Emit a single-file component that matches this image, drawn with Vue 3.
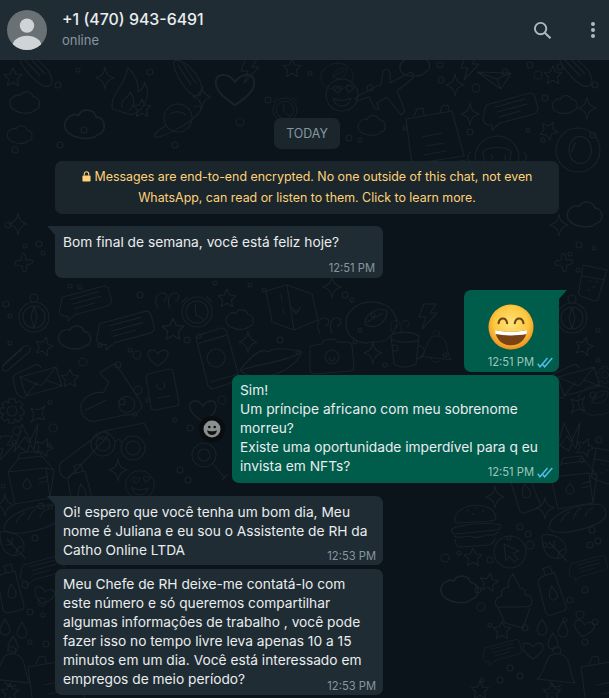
<template>
  <div class="chat">
    <header class="topbar">
      <svg class="avatar" viewBox="0 0 40 40">
        <circle cx="20" cy="20" r="20" fill="#6a7175" />
        <clipPath id="avatarClip"><circle cx="20" cy="20" r="20" /></clipPath>
        <g clip-path="url(#avatarClip)" fill="#cfd4d6">
          <circle cx="20" cy="15.6" r="7.2" />
          <ellipse cx="20" cy="36" rx="14.5" ry="10.2" />
        </g>
      </svg>
      <div class="contact">
        <div class="contact-name">+1 (470) 943-6491</div>
        <div class="contact-status">online</div>
      </div>
      <svg class="search" viewBox="0 0 20 20" fill="none" stroke="#aebac1">
        <circle cx="8" cy="8" r="6" stroke-width="2" />
        <path d="M12.4 12.4 L18.4 18.2" stroke-width="2.2" />
      </svg>
      <div class="menu"><i></i><i></i><i></i></div>
    </header>

    <main class="thread">
      <!-- wallpaper, coordinates are page pixels so shift up by the header -->
      <svg class="doodles" viewBox="0 60 609 638" fill="none" stroke="#182229" stroke-width="1.1" stroke-linejoin="round" stroke-linecap="round">
        <circle v-for="d in dots" :key="d.join()" :cx="d[0]" :cy="d[1]" :r="d[2]" />
        <path
          v-for="p in placed"
          :key="p.join()"
          :d="shapes[p[0]]"
          :transform="`translate(${p[1]} ${p[2]}) rotate(${p[3] || 0}) scale(${p[4] || 1})`"
        />
      </svg>

      <div class="pill">TODAY</div>
      <div class="notice">
        <svg class="lock" viewBox="0 0 10 12" fill="#ffd279">
          <path d="M1.4 5h7.2c.5 0 .9.4.9.9v4.700c0 .5-.4.9-.9.9H1.400c-.5 0-.9-.4-.9-.9V5.900c0-.5.4-.9.9-.9z" />
          <path d="M2.500 5V3.300a2.500 2.500 0 0 1 5 0V5" fill="none" stroke="#ffd279" stroke-width="1.200" />
        </svg>Messages are end-to-end encrypted. No one outside of this chat, not even WhatsApp, can read or listen to them. Click to learn more.
      </div>

      <div class="row">
        <div class="bubble in first short">
          <span>Bom final de semana, você está feliz hoje?</span>
          <span class="meta meta-in">12:51 PM</span>
        </div>
      </div>

      <div class="row out-row">
        <div class="bubble out emoji-bubble">
          <svg class="emoji" viewBox="0 0 48 48">
            <defs>
              <radialGradient id="faceFill" cx="50%" cy="42%" r="58%">
                <stop offset="0%" stop-color="#ffe27a" />
                <stop offset="65%" stop-color="#fcc83f" />
                <stop offset="100%" stop-color="#ee8f1c" />
              </radialGradient>
            </defs>
            <circle cx="24" cy="24" r="23.500" fill="url(#faceFill)" />
            <path d="M11 20c1-6.500 8-6.500 9 0M28 20c1-6.500 8-6.500 9 0" fill="none" stroke="#6a4213" stroke-width="2.200" stroke-linecap="round" />
            <path d="M7.500 27c10 2.500 23 2.500 33 0C40 37 33 43 24 43S8 37 7.500 27z" fill="#7a4315" />
            <path d="M7.500 27c10 2.500 23 2.500 33 0 .2 1.800-.1 3.500-.4 4.300-10 2-22.200 2-32.200 0-.3-.8-.6-2.500-.4-4.300z" fill="#fff" />
          </svg>
          <div class="meta meta-out">12:51 PM <svg class="ticks" viewBox="0 0 16 11" fill="none" stroke="#53bdeb" stroke-width="1.4"><path d="M.7 6.800 3 9.800 10.500 1M5.600 7.300 7.600 9.800 15.300 1" /></svg></div>
        </div>
      </div>

      <div class="row out-row long-row">
        <button class="react"><svg viewBox="0 0 20 20"><circle cx="10" cy="10" r="8.500" fill="#8a8f91" /><circle cx="7.300" cy="8" r="1.300" fill="#111" /><circle cx="12.700" cy="8" r="1.300" fill="#111" /><path d="M5 11.500c2.500 1 7.500 1 10 0-.6 3-2.600 4.500-5 4.500s-4.400-1.500-5-4.500z" fill="#111" /></svg></button>
        <div class="bubble out long">
          <span>Sim!<br />Um príncipe africano com meu sobrenome morreu?<br />Existe uma oportunidade imperdível para q eu invista em NFTs?</span>
          <div class="meta meta-out">12:51 PM <svg class="ticks" viewBox="0 0 16 11" fill="none" stroke="#53bdeb" stroke-width="1.4"><path d="M.7 6.800 3 9.800 10.500 1M5.600 7.300 7.600 9.800 15.300 1" /></svg></div>
        </div>
      </div>

      <div class="row group-start">
        <div class="bubble in first three">
          <span>Oi! espero que você tenha um bom dia, Meu nome é Juliana e eu sou o Assistente de RH da Catho Online LTDA</span>
          <span class="meta meta-in">12:53 PM</span>
        </div>
      </div>
      <div class="row tight">
        <div class="bubble in six">
          <span>Meu Chefe de RH deixe-me contatá-lo com este número e só queremos compartilhar algumas informações de trabalho , você pode fazer isso no tempo livre leva apenas 10 a 15 minutos em um dia. Você está interessado em empregos de meio período?</span>
          <span class="meta meta-in">12:53 PM</span>
        </div>
      </div>
    </main>
  </div>
</template>

<script setup>
const shapes = {
  sparkle: "M0-11C1-4 3-2 9 0C3 2 1 4 0 11C-1 4-3 2-9 0C-3-2-1-4 0-11Z",
  star: "M0-9L2.700-3 9-2.300 4.400 2 5.600 8.500 0 5.300-5.600 8.500-4.400 2-9-2.300-2.700-3Z",
  plus: "M-2-9C0-10 2-9 2-3L8-3C10-1 9 1 3 2L2 8C0 10-2 8-2 3L-8 2C-10 0-9-3-3-3Z",
  cloud: "M-12 3C-15-4-7-8-4-6C-2-11 6-10 7-5C13-5 14 5 8 6C4 10-8 9-12 3Z",
  heart: "M0 9C-6 5-11 1-10-4C-9-8-3-8 0-3C3-8 9-8 10-4C11 1 6 5 0 9Z",
  drop: "M0-8C3-3 5 0 5 3A5 5 0 0 1-5 3C-5 0-3-3 0-8Z",
  leaf: "M-13-13C0-15 12-8 11 3C10 10 2 12-4 9C-11 6-13-3-13-13ZM-6-6L12 13M-1-1L-1-7M4 4L9 1M-1-1L-7 0M4 4L3 9",
  message: "M-24-6L20-18C23-18 24-17 25-14L28-2C28 1 26 2 24 3L-10 12L-18 19L-18 14L-22 14C-25 13-27 12-27 8ZM-15-4L15-12M-13 1L17-7M-11 6L10 0",
  envelope: "M-20-3L16-13L22 6L-14 16ZM-20-3L1 6L16-13M-14 16L-3 2M22 6L6 0M-22-7L-5-15C-2-16 0-15 1-12M-14 18C-19 18-23 15-24 11L-27-1C-27-4-25-6-22-7",
  compass: "M0-11L3 0L0 11L-3 0ZM15 0A15 15 0 1 1-15 0A15 15 0 1 1 15 0ZM11 0A11 11 0 1 1-11 0A11 11 0 1 1 11 0ZM4-19A4 4 0 1 1-4-19A4 4 0 1 1 4-19Z",
  clock: "M15 0A15 15 0 1 1-15 0A15 15 0 1 1 15 0ZM11 0A11 11 0 1 1-11 0A11 11 0 1 1 11 0ZM-2-8L-1 3L6 7M10-15L15-10M-10-15L-15-10",
  milk: "M-22-8L-12-21L12-24L24-10L20 18L-15 24ZM-22-8L16-12L24-10M16-12L20 18M-12-21L-10-27L9-29L12-24M-3-2C-1 1 1 3 1 5A4 4 0 0 1-7 5C-7 3-5 1-3-2ZM9-1L18-4M9 3L17 1",
  bread: "M-26 8C-25-3-5-14 20-15C32-15 33-3 28 1C15 11-25 19-26 8ZM-14 3C-12-3-8-6-5-7M-2 0C0-6 2-9 6-11M10-3C12-8 14-10 18-11",
  bottle: "M-8-16L5-19L14 16C14 19 12 20 10 20L-3 23C-5 23-6 22-7 20L-12-10C-12-12-11-14-8-16ZM-4-17L-6-24L1-26L3-19M1-6C4-2 6 1 6 3A4 4 0 0 1-2 5C-2 2-1-2 1-6Z",
  bell: "M-18 14C-10 8-10-4-5-9C0-13 8-12 12-6C16-1 14 8 20 18ZM-2-13A4 4 0 1 1 4-11M-5 17C-3 22 3 23 6 20",
  burger: "M-20-3C-19-20 18-22 21-5C21-2 19-1 16-1L-17 1C-19 1-20-1-20-3ZM-8-11L-6-12M0-14L2-14M7-11L9-11M-3-8L-1-8M-23 7C-15 2 15 0 25 3C27 5 25 8 22 8L-20 12C-23 12-24 9-23 7ZM-21 14C-14 18-8 12-2 15C4 18 10 11 16 13C19 14 21 12 23 10M-20 17L-19 22C-18 24-16 25-14 25L14 23C17 22 19 20 20 16",
  cupcake: "M-16 9C-20 2-15-2-11-2C-14-8-7-11-4-11C-6-16-4-20 0-24C2-18 6-16 7-10C12-10 13-6 12-3C18-3 21 2 18 7C17 9 15 9-16 9ZM-15 9L-8 25L10 30L17 10",
  cursor: "M16 0A16 16 0 1 1-16 0A16 16 0 1 1 16 0ZM-6-8L9-1L3 1L8 7L4 10L-1 4L-4 9Z",
  clip: "M-14 10L6-8C12-12 16-6 11-2L-9 15C-13 18-17 13-13 10L5-6",
  gear: "M-3-12L3-12L4-8L8-10L11-6L8-3L12-1L12 4L8 4L10 8L6 11L3 8L2 12L-3 12L-4 8L-8 10L-11 6L-8 3L-12 2L-12-3L-8-3L-10-7L-6-10L-3-8ZM5 0A5 5 0 1 1-5 0A5 5 0 1 1 5 0Z",
  bow: "M-14 14L-6-14L2 3L10-14L6 12L-3-1ZM-10 8L-1 14L3 3",
  glass: "M-9-17L15-12L6 17C5 19 4 19 2 19L-11 14C-13 13-14 11-13 9ZM-10-6L13-2M-3-1L-1-1M4 0L6 0M1 5L3 5M-4 8L-2 8",
  face: "M16 0A16 16 0 1 1-16 0A16 16 0 1 1 16 0ZM-8-5C-11-9-5-10-4-7C-3-10 1-8-1-5L-4-2ZM4-7C3-10 8-11 9-8C10-11 13-7 10-5L6-3ZM-9 3C-4 6 3 6 9 3C8 9 3 11 0 11C-5 11-8 8-9 3Z",
  plane: "M2-26C4-26 6-22 5-12L24-22C28-24 30-20 27-16L12-4L20 16L16 20L2 2L-8 8L-6 14L-10 14L-16 2L-28 6L-30 3L-10-8L-4-10L-2-24Z",
  calendar: "M-24-13L22-21L34 24L-18 32ZM-16-16L-13-23L-7-24L-6-17M10-19L12-26L18-27L19-21M-19 36L36 28M-8 5L12 1M-4 14L14 11M-6 23L16 19",
  phone: "M-14-24L8-28C11-28 13-27 14-24L20 22C20 25 18 27 16 27L-7 31C-10 31-11 29-12 27L-17-20C-18-22-16-24-14-24ZM-15-16L13-20M-9 24L19 20M9 1A9 9 0 1 1-9 1A9 9 0 1 1 9 1Z",
  camera: "M-20-9L-8-11L-6-15L5-16L7-13L18-13C20-13 22-11 22-9L24 12C24 14 22 16 20 16L-16 19C-18 19-20 17-20 15ZM9 2A7 7 0 1 1-5 2A7 7 0 1 1 9 2ZM4 2A2.500 2.500 0 1 1 0 2",
  mug: "M-14-15C-6-19 6-19 14-14L11 14C4 18-6 18-11 14ZM-14-11C-6-7 6-7 14-10M14-4C21-5 22 7 12 9",
  map: "M-24-15L-3-21L22-12L28 14L4 24L-18 16ZM-3-21L4 24M-9-12L-8-5M-7 2L-6 8M10 1A4 4 0 1 1 2 1C2 5 6 7 6 8C6 7 10 5 10 1Z",
  monkey: "M22 0A22 22 0 1 1-22 0A22 22 0 1 1 22 0ZM-14-6C-10-12 10-12 14-6C14 4 8 12 0 12C-8 12-14 4-14-6ZM-6-3A2 2 0 1 1-6 1M7-3A2 2 0 1 1 7 1M-26-6A5 5 0 1 0-22 4M26-6A5 5 0 1 1 22 4",
  helmet: "M20 0A20 20 0 1 1-20 0A20 20 0 1 1 20 0ZM12-2A9 11 0 1 1-8 2A9 11 0 1 1 12-2ZM-2-7L-6 2",
  glasses: "M-3 4A12 12 0 1 1-27 4A12 12 0 1 1-3 4ZM-8 4A7 7 0 1 1-22 4A7 7 0 1 1-8 4ZM27 8A12 12 0 1 1 3 8A12 12 0 1 1 27 8ZM22 8A7 7 0 1 1 8 8A7 7 0 1 1 22 8ZM-3 2C-1-2 2-1 4 3M-14-9L26-17M26-17L32-6",
  lens: "M12 0A12 12 0 1 1-12 0A12 12 0 1 1 12 0ZM6 0A6 6 0 1 1-6 0A6 6 0 1 1 6 0ZM9 9L20 22M18 25L23 20",
  scooter: "M-30 8C-30-3-16-8-6-6L0-16L-8-26L8-34L14-24L30 6C34 14 24 20 14 18L-18 22C-24 22-30 16-30 8ZM24 8A8 8 0 1 1 8 8A8 8 0 1 1 24 8ZM-26 10L-4 2",
  card: "M-13-15L8-20C10-20 12-19 12-17L18 13C18 15 17 17 15 17L-6 21C-8 21-10 20-10 18L-15-12C-15-13-14-15-13-15ZM3-6A4 4 0 1 1-4-5M-3 9L9 7",
  roll: "M-30 8L14-16C18-18 22-14 18-10L-24 24C-32 28-36 14-30 8ZM8-14C10-10 12-8 16-8",
  bolt: "M-4-12L8-12L2-3L9-3L-6 13L-2 1L-9 1Z",
  paper: "M-16-7L18-6L8 10ZM-16-7L4 0L18-6M4 0L8 10",
  comet: "M-16-15C-4-18 14-2 16 10C17 17 9 18 4 14C-5 8-20-10-16-15ZM-12-11L4 6M-7-13L9 4",
  flame: "M-14 22C-20 8-6 0-6-22C2-16 8-8 8 0C12-2 13-6 13-10C22 0 18 18 6 24ZM-5 18C-8 10 0 8 1 2C6 8 8 14 3 20",
  planet: "M14 0A14 14 0 1 1-14 0A14 14 0 1 1 14 0ZM-12 8C-24 14-26 20-20 19C-14 18 8 8 18-2C26-10 24-14 16-11M-8-4C-3-7 3-7 8-3",
  quote: "M-8 8C-12 2-11-7-3-7C2-7 2 0-3 1M4 8C1 2 2-7 9-7C14-7 14 0 9 1",
  lips: "M-30 12C-22 2-10-12-2-6C6-12 26-8 32-6C26 8 8 18-6 18C-16 20-24 18-30 12ZM-28 12C-14 6 14 4 28-4",
  cup: "M-26-6C-16-22 8-22 16-8C24 2 14 20-2 18C-14 22-32 14-26-6ZM-10 2C-10-8 2-14 10-10C10 0 0 8-10 2ZM-8 0L6-8"
}

// [shape, x, y, rotate, scale]
const placed = [
  ["star", 13, 77], ["cloud", 25, 103, 0, 1.2], ["sparkle", 105, 78], ["flame", 130, 90, 10], ["comet", 36, 70],
  ["comet", 188, 78, 10], ["heart", 235, 88, 0, 1.9], ["sparkle", 202, 97], ["planet", 178, 118], ["cloud", 85, 125, 0, 1.6],
  ["star", 142, 108], ["clock", 285, 110, 0, 0.8], ["star", 292, 68], ["bolt", 250, 70], ["cloud", 20, 135],
  ["face", 342, 95], ["plane", 385, 95], ["cloud", 415, 66, -8, 1.2], ["calendar", 430, 132], ["cloud", 372, 126, -5, 1.1],
  ["sparkle", 455, 85], ["bolt", 470, 67], ["paper", 493, 79], ["star", 553, 75], ["comet", 576, 70],
  ["message", 510, 111, 0, 1], ["sparkle", 470, 114], ["sparkle", 587, 108], ["cloud", 565, 105, -5, 1], ["star", 549, 130, 30],
  ["monkey", 497, 158], ["helmet", 578, 150, 0, 1.1], ["cup", 340, 76, 0, 0.7],

  ["sparkle", 18, 224], ["plus", 24, 263], ["compass", 34, 317], ["clip", 17, 355], ["star", 44, 346, 15],
  ["envelope", 40, 380], ["gear", 12, 411], ["sparkle", 38, 414, 40], ["bow", 28, 438], ["star", 44, 447, 20],
  ["milk", 30, 480], ["bolt", 5, 448], ["sparkle", 5, 505], ["bread", 30, 520], ["leaf", 13, 545],
  ["message", 42, 570, 0, 0.8], ["bottle", 10, 590], ["drop", 5, 627], ["drop", 22, 630], ["drop", 13, 644],
  ["heart", 44, 595, 15], ["bell", 10, 665], ["star", 10, 692], ["calendar", 52, 680],

  ["sparkle", 559, 225], ["plus", 564, 263], ["glass", 592, 282], ["cloud", 585, 215, 0, 1.4], ["compass", 572, 318],
  ["star", 584, 346, 15], ["envelope", 578, 380], ["sparkle", 578, 405, 40], ["bow", 570, 437], ["star", 585, 447, 20],
  ["cup", 600, 400, 0, 0.8], ["gear", 605, 375, 0, 0.7], ["milk", 573, 485], ["glass", 605, 465],

  ["burger", 475, 522], ["bread", 575, 519], ["sparkle", 545, 508], ["sparkle", 495, 497], ["bottle", 524, 490, -8],
  ["cursor", 510, 552], ["leaf", 555, 548], ["message", 588, 568, 0, 0.7], ["star", 473, 557], ["bottle", 551, 592, -5],
  ["cupcake", 513, 598], ["star", 489, 582, 10], ["star", 502, 630], ["heart", 584, 628, 10], ["drop", 542, 627],
  ["drop", 563, 629], ["drop", 553, 641], ["message", 502, 652, 0, 0.7], ["heart", 533, 650], ["bell", 555, 665],
  ["calendar", 605, 680], ["star", 552, 692], ["cloud", 460, 590, 0, 1.5], ["star", 480, 690],

  ["message", 85, 303, 0, 0.95], ["message", 125, 330, 0, 1.05], ["quote", 166, 300], ["clock", 197, 312], ["star", 173, 329, 0, 1.2],
  ["star", 227, 298], ["cloud", 240, 320, 0, 1.1], ["map", 290, 306], ["quote", 328, 325], ["sparkle", 332, 287],
  ["phone", 216, 357, -8], ["sparkle", 248, 342], ["lips", 270, 358], ["camera", 330, 355], ["mug", 405, 350],
  ["bell", 435, 345, 0, 0.8], ["bolt", 428, 316], ["sparkle", 373, 353], ["cup", 376, 322, 0, 1.1], ["quote", 399, 326, 0, 0.8],
  ["scooter", 110, 398, -5], ["heart", 158, 357], ["card", 161, 389], ["glasses", 118, 440], ["lens", 204, 455],
  ["roll", 90, 450, -8], ["sparkle", 118, 470], ["cloud", 75, 338, 0, 1.3], ["star", 70, 378], ["heart", 203, 410, 0, 1.3],
  ["face", 140, 485, 0, 0.9], ["bottle", 80, 490]
]

const dots = [
  [58, 85, 3], [78, 70, 2], [84, 130, 3], [150, 72, 3], [268, 100, 3], [240, 122, 4], [15, 150, 3], [60, 145, 3], [175, 145, 3],
  [310, 73, 2], [370, 88, 3], [440, 65, 3], [441, 80, 3], [476, 88, 4], [505, 72, 3], [530, 65, 3], [538, 75, 4], [560, 67, 3],
  [595, 85, 3], [545, 98, 3], [593, 135, 3], [528, 130, 2], [349, 138, 3], [360, 140, 2], [405, 128, 2], [470, 132, 3], [543, 140, 2],
  [8, 225, 3], [25, 246, 2], [39, 244, 3], [43, 253, 2], [6, 304, 3], [10, 316, 2], [10, 343, 2], [49, 445, 2], [17, 431, 4], [53, 428, 4],
  [50, 402, 2], [14, 442, 2], [3, 486, 2], [35, 538, 3], [41, 506, 3], [50, 507, 2], [25, 585, 3], [43, 615, 2], [30, 612, 3],
  [42, 602, 4], [30, 642, 2], [46, 644, 3], [579, 245, 3], [570, 254, 2], [594, 248, 2], [578, 270, 2], [598, 330, 2], [598, 360, 2], [593, 395, 3],
  [599, 440, 3], [582, 460, 2], [509, 538, 2], [520, 527, 3], [528, 534, 3], [530, 545, 4], [545, 545, 2], [592, 530, 3], [590, 545, 3], [598, 541, 3],
  [445, 558, 4], [459, 553, 2], [490, 560, 3], [481, 607, 4], [490, 625, 2], [478, 590, 3], [570, 600, 3], [580, 615, 4], [585, 590, 3], [565, 620, 2],
  [525, 628, 3], [510, 668, 3], [482, 680, 2], [500, 680, 3], [520, 676, 3], [585, 642, 3], [595, 622, 3],
  [70, 286, 2], [80, 287, 2], [140, 295, 3], [215, 283, 2], [250, 285, 2], [264, 290, 2], [345, 295, 3], [352, 300, 2], [360, 330, 2], [373, 315, 2],
  [187, 340, 3], [199, 336, 2], [130, 350, 2], [137, 355, 4], [83, 362, 4], [100, 345, 2], [118, 365, 3], [122, 402, 3], [138, 390, 4], [135, 414, 2], [148, 400, 2],
  [190, 428, 3], [175, 420, 2], [180, 470, 3], [188, 480, 3], [222, 400, 4], [395, 348, 3], [280, 340, 3], [298, 352, 2], [355, 342, 2], [385, 365, 2], [445, 355, 2]
]
</script>

<style>
html, body { margin: 0; background: #0b141a; }
</style>

<style scoped>
.chat {
  width: 609px;
  height: 698px;
  overflow: hidden;
  background: #0b141a;
  color: #e9edef;
  font-family: Inter, "Liberation Sans", sans-serif;
  font-size: 13.75px;
  line-height: 19px;
  display: flex;
  flex-direction: column;
}
.topbar {
  height: 60px;
  flex: none;
  box-sizing: border-box;
  background: #202c33;
  display: flex;
  align-items: center;
  padding: 0 11px 0 7px;
}
.avatar { width: 40px; height: 40px; margin-right: 15px; flex: none; }
.contact { flex: 1; }
.contact-name { font-size: 15.9px; font-weight: 500; line-height: 21px; margin-top: -1px; }
.contact-status { font-size: 13px; line-height: 20px; color: #8696a0; }
.search { width: 19px; height: 19px; margin: 1px 39px 0 0; }
.menu { width: 4px; display: flex; flex-direction: column; gap: 2px; margin-right: 3px; }
.menu i { width: 4px; height: 4px; border-radius: 50%; background: #aebac1; }

.thread {
  position: relative;
  flex: 1;
  padding: 58px 50px 0 55px;
  display: flex;
  flex-direction: column;
  min-height: 0;
}
.doodles { position: absolute; left: 0; top: 0; width: 609px; height: 638px; }
.pill, .notice, .row { position: relative; }

.pill {
  align-self: center;
  box-sizing: border-box;
  height: 31px;
  padding: 0 12px;
  border-radius: 7px;
  background: #1b262c;
  color: #8696a0;
  font-size: 12.4px;
  line-height: 31px;
}
.notice {
  margin-top: 12px;
  height: 53px;
  box-sizing: border-box;
  padding: 5px 24px;
  background: #1b262c;
  border-radius: 7px;
  color: #ffd279;
  font-size: 12.4px;
  line-height: 21px;
  text-align: center;
}
.lock { width: 9px; height: 11px; margin-right: 4px; vertical-align: -1px; }

.row { display: flex; margin-top: 12px; }
.out-row { justify-content: flex-end; align-items: center; }
.long-row { margin-top: 3px; }
.group-start { margin-top: 13px; }
.row.tight { margin-top: 4px; }

.bubble { position: relative; box-sizing: border-box; border-radius: 7px; }
.bubble.in { width: 328px; background: #202c33; padding: 7px 12px 6px 8px; }
.bubble.out { background: #005c4b; }
.short { height: 52px; }
.three { height: 69px; }
.bubble.in.six { height: 126px; padding-top: 6px; }
.bubble.in.first { border-top-left-radius: 0; }
.bubble.in.first::before {
  content: "";
  position: absolute;
  left: -8px;
  top: 0;
  border-top: 9px solid #202c33;
  border-left: 8px solid transparent;
}
.emoji-bubble { width: 95px; height: 82px; border-top-right-radius: 0; padding: 14px 0 0 24px; }
.emoji-bubble::after {
  content: "";
  position: absolute;
  right: -8px;
  top: 0;
  border-top: 9px solid #005c4b;
  border-right: 8px solid transparent;
}
.emoji { width: 46px; height: 46px; display: block; }
.long { width: 327px; height: 108px; padding: 6px 8px; }
.meta { font-size: 11px; line-height: 15px; color: #8696a0; white-space: nowrap; }
.meta-in { position: absolute; right: 7px; bottom: 1px; font-size: 11.2px; }
.short .meta-in { right: 8px; bottom: 2px; }
.meta-out {
  position: absolute;
  right: 6px;
  bottom: 3px;
  font-size: 11.2px;
  color: #9dc5bc;
  display: flex;
  align-items: center;
  gap: 3px;
}
.emoji-bubble .meta-out { bottom: 2px; }
.ticks { width: 16px; height: 11px; }
.react {
  width: 26px;
  height: 26px;
  padding: 3px;
  border: 0;
  border-radius: 50%;
  background: #0a0d0f;
  margin-right: 7px;
  box-sizing: border-box;
}
.react svg { width: 20px; height: 20px; display: block; }
</style>
